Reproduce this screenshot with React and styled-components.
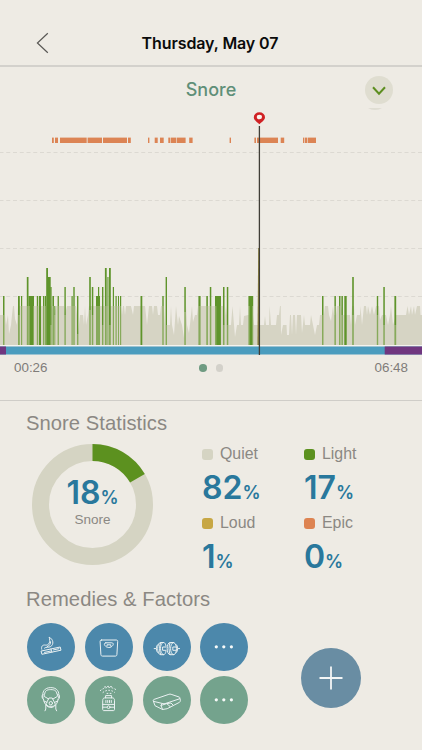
import styled, { createGlobalStyle } from "styled-components";

const GlobalStyle = createGlobalStyle`
  * {
    box-sizing: border-box;
  }
  body {
    margin: 0;
    background-color: #eeebe4;
  }
`;

const sans = `"Liberation Sans", Arial, sans-serif`;
const display = `Inter, "Liberation Sans", sans-serif`;

const Screen = styled.main`
  width: 422px;
  height: 750px;
  overflow: hidden;
  display: flex;
  flex-direction: column;
  background-color: #eeebe4;
  font-family: ${sans};
  color: #8b8883;
`;

const Header = styled.header`
  height: 67px;
  padding: 20px 36px 0;
  display: grid;
  grid-template-columns: 40px 1fr 40px;
  align-items: center;
  border-bottom: 2px solid #d3d1cc;
`;
const IconButton = styled.button`
  padding: 0;
  border: 0;
  background: none;
  display: flex;
`;
const Title = styled.h1`
  margin: 0;
  text-align: center;
  font: 600 16px/20px ${display};
  letter-spacing: -0.1px;
  color: #0b0b0b;
  white-space: nowrap;
  padding-right: 2px;
`;

const ChartHeader = styled.div`
  height: 43px;
  padding: 2px 29px 0;
  display: grid;
  grid-template-columns: 28px 1fr 28px;
  align-items: center;
`;
const ChartTitle = styled.h2`
  margin: 0;
  text-align: center;
  font: 500 18px/24px ${display};
  color: #5f8f78;
`;
const Toggle = styled(IconButton)`
  width: 28px;
  height: 28px;
  border-radius: 50%;
  background-color: #dfddd0;
  align-items: center;
  justify-content: center;
`;
const Chart = styled.svg`
  display: block;
  flex: none;
`;
const ChartFooter = styled.div`
  height: 46px;
  padding: 4px 14px 0;
  display: grid;
  grid-template-columns: 1fr auto 1fr;
  align-items: start;
  border-bottom: 1px solid #cfcdc8;
`;
const Time = styled.span`
  font-size: 13.4px;
  line-height: 17px;
  color: #7f7c79;
  text-align: ${(p) => p.$align || "left"};
`;
const Dots = styled.div`
  display: flex;
  gap: 9px;
  padding-top: 5px;
`;
const Dot = styled.span`
  width: 7.5px;
  height: 7.5px;
  border-radius: 50%;
  background-color: ${(p) => (p.$active ? "#6f9b82" : "#d3d1ca")};
`;

const SectionTitle = styled.h2`
  margin: 0;
  font: 400 20.2px/24px ${sans};
  letter-spacing: ${(p) => p.$spacing || 0};
  color: #8b8883;
`;
const Statistics = styled.section`
  height: 185px;
  padding: 10px 26px 0;
`;
const StatsBody = styled.div`
  display: flex;
  gap: 49px;
  padding: 9px 0 0 6px;
`;
const Donut = styled.div`
  width: 121px;
  height: 121px;
  display: grid;

  > * {
    grid-area: 1 / 1;
  }
`;
const DonutLabel = styled.div`
  display: flex;
  flex-direction: column;
  align-items: center;
  padding-top: 31px;
  font-size: 13.5px;
  line-height: 16px;
`;
const Percent = styled.div`
  height: 37px;
  font: 600 32px/36px ${display};
  color: #29789c;

  small {
    font-size: 18px;
  }
`;
const StatGrid = styled.div`
  display: grid;
  grid-template-columns: 102px 80px;
  grid-auto-rows: 69px;
`;
const StatLabel = styled.div`
  display: flex;
  align-items: center;
  gap: 7px;
  height: 20px;
  margin-bottom: 6px;
  font-size: 15.9px;
  line-height: 20px;
`;
const Swatch = styled.i`
  width: 11px;
  height: 11px;
  border-radius: 3px;
  background-color: ${(p) => p.$color};
`;

const Factors = styled.section`
  padding: 1px 26px 0;
`;
const FactorsBody = styled.div`
  display: flex;
  align-items: center;
  gap: 53px;
  padding: 11.5px 0 0 1px;
`;
const FactorGrid = styled.div`
  display: grid;
  grid-template-columns: repeat(4, 48px);
  gap: 5px 9.8px;
`;
const Factor = styled.button`
  width: 48px;
  height: 48px;
  padding: 0;
  border: 0;
  border-radius: 50%;
  background-color: ${(p) => (p.$remedy ? "#74a38d" : "#4c88ab")};

  svg {
    display: block;
  }
`;
const AddButton = styled(IconButton)`
  width: 60px;
  height: 60px;
  margin-top: 10px;
  border-radius: 50%;
  background-color: #698da3;
  align-items: center;
  justify-content: center;
`;

const BASE = 345;

// snoring above the alert threshold, [from, to]
const episodes = [
  [52, 53.8], [55, 58], [60, 86.7], [87.6, 102], [103, 127], [128, 130.8],
  [148, 149.4], [154.7, 157.7], [160, 163.7], [168.3, 170], [170.6, 176],
  [176.6, 185.6], [189.2, 192.6], [229.6, 231], [254.4, 256], [257, 278],
  [280.7, 284.2], [303, 304.2], [304.8, 307], [307.6, 316]
];

// outline of the quiet level, [x, y]
const quiet = [
  [0, 315], [5, 315], [6, 325], [8, 315], [9, 334], [11, 325], [12, 315],
  [13, 306], [14, 306], [15, 319], [17, 325], [18, 306], [27, 306],
  [52, 306], [54, 315], [56, 306], [64, 306], [65, 315], [67, 306],
  [76, 306], [77, 315], [78, 334], [80, 315], [83, 315], [84, 325],
  [85, 306], [86, 325], [88, 315], [89, 306], [121, 306], [122, 315],
  [123, 306], [124, 306], [125, 315], [126, 306], [131, 306], [133, 315],
  [134, 306], [145, 306], [146, 315], [147, 325], [149, 306], [152, 306],
  [153, 315], [154, 306], [157, 306], [158, 315], [160, 315], [161, 306],
  [164, 306], [165, 325], [170, 325], [171, 306], [172, 325], [174, 335],
  [176, 306], [178, 325], [179, 316], [182, 325], [184, 338], [186, 306],
  [187, 325], [189, 333], [192, 306], [193, 322], [195, 315], [197, 315],
  [198, 306], [223, 306], [224, 325], [226, 306], [228, 325], [231, 325],
  [232.5, 306], [234, 325], [235, 337], [237, 325], [239, 325], [240, 306],
  [241, 325], [243, 325], [244, 316], [248, 315], [253, 315], [254, 325],
  [264, 325], [265, 316], [266, 325], [269, 325], [269.6, 306], [271, 325],
  [276, 325], [277, 315], [279, 315], [280, 306], [280.8, 306], [281, 335],
  [283, 325], [286.5, 325], [287, 335], [289, 335], [290, 315], [291, 315],
  [292, 335], [293, 315], [295, 315], [296, 335], [297, 315], [301, 315],
  [302, 333], [304, 315], [305, 325], [310, 325], [311, 315], [313, 325],
  [315, 335], [317, 325], [319, 325], [320, 315], [324, 315], [325, 306],
  [328, 306], [329, 315], [331, 321], [333, 306], [334, 315], [336, 315],
  [337, 306], [341, 306], [343, 315], [350, 315], [351, 325], [352, 306],
  [354, 306], [355, 325], [357, 315], [360, 315], [360.5, 306], [362, 325],
  [364, 306], [366, 306], [367, 315], [368, 306], [370, 315], [372, 306],
  [374, 315], [376, 306], [379, 306], [380, 320], [382, 315], [386, 315],
  [388, 325], [390, 315], [391, 306], [393, 325], [396, 315], [406, 315],
  [407.5, 306], [409, 315], [411, 306], [412, 315], [414, 306], [415, 315],
  [417, 306], [420, 306], [420.5, 315], [422, 315]
];

// light snoring, [x, width, top, bottom of the solid part]
const light = [
  [3, 1.5, 296, 315], [18, 1.8, 296, 315], [21, 1.2, 296, 306],
  [26.8, 1.7, 277, 306], [28.5, 5.5, 296, 306], [30, 3, 306, BASE],
  [36.8, 1.4, 296, 306], [39, 2, 296, BASE], [43, 1.3, 296, 306],
  [44.8, 1.2, 296, 306], [46.2, 1.8, 268, BASE], [47.7, 3, 277, BASE],
  [50.3, 1.3, 287, 325], [52.4, 1.6, 296, 306], [54.3, 1, 306, 315],
  [57.6, 1.3, 296, 306], [64.4, 1.4, 287, 315], [71.5, 1.2, 296, 306],
  [73.3, 1.4, 287, 306], [77, 1.4, 296, 334], [89.2, 1.6, 277, 310],
  [91.8, 1.5, 287, 315], [96, 4, 296, 306], [98, 1.2, 287, 306],
  [102, 1.4, 287, 325], [104.9, 1.8, 268, 306], [107.4, 1.1, 277, 306],
  [109, 1.8, 268, 325], [112.8, 1.2, 287, 306], [115.5, 1.2, 296, 306],
  [118, 1, 296, 306], [120, 1.2, 296, 306], [140.5, 1.8, 296, BASE],
  [162.3, 1.4, 296, 306], [165.6, 1.4, 277, 325], [184.3, 1.5, 287, 312],
  [198.4, 2.2, 296, 306], [206.3, 1.6, 296, 306], [209.8, 1.5, 287, 306],
  [215, 6, 296, 306], [216.5, 4.2, 306, BASE], [223, 1.5, 287, 325],
  [226.8, 1.5, 287, 325], [248.4, 4.8, 296, 306], [249.8, 2.2, 306, BASE],
  [322, 1.5, 296, 315], [334.4, 1.5, 296, 306], [339, 1.5, 296, 306],
  [341.4, 1.5, 296, 315], [344.3, 2.4, 296, BASE], [352.2, 1.6, 277, 315],
  [376.8, 1.4, 296, 315], [383.3, 1.5, 287, 325], [394.4, 1.8, 296, 325]
];

const stats = [
  { label: "Quiet", value: 82, color: "#d5d4c3" },
  { label: "Light", value: 17, color: "#5c911f" },
  { label: "Loud", value: 1, color: "#c7a744" },
  { label: "Epic", value: 0, color: "#dd8351" }
];

const drawings = {
  cigarette: (
    <>
      <path d="M14.4 28 33.2 24 34 27.2 15.3 31.2ZM17.5 29.4 23.5 28.1M24 26l.8 3.1M26.5 26.9l5.4-1.2" />
      <path d="M14.7 26.2c-.7-2.8.8-4.6 3.8-4.1 3.6.5 5.2-3.6 3.6-7.9 4.3 2 5 7.2 1.6 9.3-2.4 1.5-4.4-.1-6.2 1.6M20.3 23.6c2.2-.8 3.4-2.6 3.3-4.9" />
    </>
  ),
  scale: (
    <>
      <path d="M16.5 17h14.7c1.1 0 1.6.6 1.5 1.6l-.8 13c-.1 1-.6 1.5-1.5 1.5H17.5c-1 0-1.5-.5-1.6-1.5l-.8-13c-.1-1 .4-1.6 1.4-1.6Z" />
      <path d="M20.8 19.8h6c1.4 0 1.9 1.4 1 2.6-.9 1.3-2.4 2.1-4 2.1s-3.1-.8-4-2.1c-.9-1.2-.4-2.6 1-2.6ZM22 23v-1.2h3.8V23" />
    </>
  ),
  dumbbell: (
    <>
      <path d="M11.2 25.6h1.6M35 25.6h1.6" />
      <path d="M15 21.5c-2.2 0-2.2 8.2 0 8.2M33 21.5c2.2 0 2.2 8.2 0 8.2" />
      <path d="M20.5 19.5h-2.8c-4 0-4 12.2 0 12.2h2.8c1.4 0 2.2-1.6 2.5-3.5M23 23c-.3-1.9-1.1-3.5-2.5-3.5-4 0-4 12.2 0 12.2M17.7 19.5c-1.6 3-1.6 9.2 0 12.2M23 24h-3.4v3.3H23" />
      <path d="M30.5 19.5h-3.3c-4 0-4 12.2 0 12.2h3.3c4 0 4-12.2 0-12.2ZM30.5 19.5c-4 0-4 12.2 0 12.2M27.2 19.5c-1.6 3-1.6 9.2 0 12.2M33.3 24h-3.5v3.3h3.5" />
    </>
  ),
  mask: (
    <>
      <path d="M15.9 21.6c-1.2-5.9 1.7-10 7.9-10s9.1 4.1 7.9 10M17.7 17.8c.3-2.9 2-4.2 6.1-4.2s5.8 1.3 6.1 4.2M15.7 18.6c-1.2.4-.9 4.2.5 4.9M31.9 18.6c1.2.4.9 4.2-.5 4.9" />
      <path d="M17.2 18.2v2.2l4.4 2.6M30.4 18.2v2.2L26 23M16.4 22.8c.4 4.7 3.7 8.7 7.4 8.7s7-4 7.4-8.7M17 25l3 1.4M30.6 25l-3 1.4M18.8 29.4V33l-.8 1.8M28.8 29.4V33l.8 1.8" />
      <path d="M22.4 22h2.8l3.2 6.2-1.9 2.1h-5.4l-1.9-2.1Z" />
      <circle cx="23.8" cy="27.2" r="1.7" />
    </>
  ),
  humidifier: (
    <>
      <path d="M17.7 24.3c0-1.5.8-2.4 2-2.4h7.8c1.2 0 2 .9 2 2.4v9.3c0 .6-.4 1-1 1h-9.8c-.6 0-1-.4-1-1ZM17.7 31.2h4M25.4 31.2h4.1M20.6 21.8v-2.2h6v2.2M20.9 24.5v2M22.7 24.5v2M24.5 24.5v2M26.3 24.5v2M17.7 28.4h11.8" />
      <circle cx="23.6" cy="31.2" r="1.4" />
      <path strokeDasharray="0.9 2.2" d="M15.3 14.6c5-4.2 12-4.2 17 0M18 16.4c3.6-2.8 8-2.8 11.6 0M19.5 11c2.8-.8 5.6-.8 8.4 0M22 17.4h4" />
    </>
  ),
  pillow: (
    <>
      <path d="M10.5 25.1c-.6-.7-.3-1.3.6-1.7l14.8-5.1c.8-.3 1.4-.3 2.2 0l8 2.7c1 .5 1.2 1.2.5 1.8L23 27.3c-1.4.5-2.6.5-4 .1Z" />
      <path d="M10.4 25.2 12 29.7l7.6 3.8 4.6-.8 12.3-6.4c1.2-.7 1.2-3.4.1-4.2M19 27.4l-1 2.1 1.6 4M18 29.5l5.7-1.9 3.5 3M23.7 27.6l4.3-.6 2 2" />
    </>
  ),
  more: (
    <g fill="#f7faf9" stroke="none">
      <circle cx="16.3" cy="23.8" r="1.6" />
      <circle cx="23.8" cy="23.8" r="1.6" />
      <circle cx="31.4" cy="23.8" r="1.6" />
    </g>
  )
};

const factors = [
  { icon: "cigarette" },
  { icon: "scale" },
  { icon: "dumbbell" },
  { icon: "more" },
  { icon: "mask", remedy: true },
  { icon: "humidifier", remedy: true },
  { icon: "pillow", remedy: true },
  { icon: "more", remedy: true }
];

function SnoreChart() {
  return (
    <Chart width="422" height="245" viewBox="0 110 422 245">
      {[152.5, 200.5, 248.5, 296.5].map((y) => (
        <path
          key={y}
          d={`M-0.5 ${y}H422`}
          stroke="#dcd9d2"
          strokeDasharray="4 2.75"
        />
      ))}
      {episodes.map(([from, to]) => (
        <rect key={from} x={from} y="137.6" width={to - from} height="5.4" fill="#dc8454" />
      ))}
      <polygon
        points={`0,${BASE} ${quiet.join(" ")} 422,${BASE}`}
        fill="#d6d4c4"
      />
      {light.map(([x, width, top, bottom]) => (
        <g key={`${x}-${top}`}>
          <rect x={x} y={top} width={width} height={bottom - top} fill="#5f942b" />
          <rect x={x} y={bottom} width={width} height={BASE - bottom} fill="#87aa5b" />
        </g>
      ))}
      <path d="M0 345.5H422" stroke="#f5f3ee" />
      <path d="M0 350.5H422" stroke="#4a9cbe" strokeWidth="8" />
      <path d="M0 350.5H6M384.7 350.5H422" stroke="#70367f" strokeWidth="8" />
      <path d="M257.4 345 258.2 248H259V345Z" fill="#8f8440" />
      <path d="M259.4 126V355" stroke="#403e37" strokeWidth="1.3" />
      <path
        d="M259.4 124.3c-1-1.7-5.6-3.6-5.6-7.1a5.6 5 0 0 1 11.2 0c0 3.5-4.6 5.4-5.6 7.1Z"
        fill="#d02124"
      />
      <ellipse cx="259.4" cy="117" rx="2.6" ry="2.3" fill="#f9f4ee" />
    </Chart>
  );
}

export default function App() {
  return (
    <Screen>
      <GlobalStyle />
      <Header>
        <IconButton aria-label="Back">
          <svg width="14" height="22" viewBox="0 0 14 22" fill="none" stroke="#595855" strokeWidth="1.2">
            <path d="M11.8 1.2 1.4 11 11.8 20.8" />
          </svg>
        </IconButton>
        <Title>Thursday, May 07</Title>
      </Header>
      <ChartHeader>
        <span />
        <ChartTitle>Snore</ChartTitle>
        <Toggle aria-label="Expand">
          <svg width="28" height="40" viewBox="0 0 28 40" overflow="visible" fill="none">
            <path d="M8 17.3 14 23.7 20 17.3" stroke="#5d8e20" strokeWidth="2" />
            <path d="M3 38.2H17Q10 41.4 3 38.2Z" fill="#dad8cd" />
          </svg>
        </Toggle>
      </ChartHeader>
      <SnoreChart />
      <ChartFooter>
        <Time>00:26</Time>
        <Dots>
          <Dot $active />
          <Dot />
        </Dots>
        <Time $align="right">06:48</Time>
      </ChartFooter>
      <Statistics>
        <SectionTitle $spacing="0.05px">Snore Statistics</SectionTitle>
        <StatsBody>
          <Donut>
            <svg width="121" height="121" fill="none" strokeWidth="17">
              <circle cx="60.5" cy="60.5" r="52" stroke="#d5d4c3" />
              <circle
                cx="60.5"
                cy="60.5"
                r="52"
                pathLength="100"
                stroke="#5c911f"
                strokeDasharray="16.6 83.4"
                transform="rotate(-90 60.5 60.5)"
              />
            </svg>
            <DonutLabel>
              <Percent>
                18<small>%</small>
              </Percent>
              Snore
            </DonutLabel>
          </Donut>
          <StatGrid>
            {stats.map(({ label, value, color }) => (
              <div key={label}>
                <StatLabel>
                  <Swatch $color={color} />
                  {label}
                </StatLabel>
                <Percent>
                  {value}
                  <small>%</small>
                </Percent>
              </div>
            ))}
          </StatGrid>
        </StatsBody>
      </Statistics>
      <Factors>
        <SectionTitle $spacing="0.07px">Remedies &amp; Factors</SectionTitle>
        <FactorsBody>
          <FactorGrid>
            {factors.map(({ icon, remedy }, i) => (
              <Factor key={i} $remedy={remedy} aria-label={icon}>
                <svg
                  width="48"
                  height="48"
                  fill="none"
                  stroke="#eaf1f2"
                  strokeWidth="1"
                  strokeLinejoin="round"
                  strokeLinecap="round"
                >
                  {drawings[icon]}
                </svg>
              </Factor>
            ))}
          </FactorGrid>
          <AddButton aria-label="Add">
            <svg width="24" height="24" stroke="#f4f6f6" strokeWidth="1.8">
              <path d="M12 .5V23.5M.5 12H23.5" />
            </svg>
          </AddButton>
        </FactorsBody>
      </Factors>
    </Screen>
  );
}
